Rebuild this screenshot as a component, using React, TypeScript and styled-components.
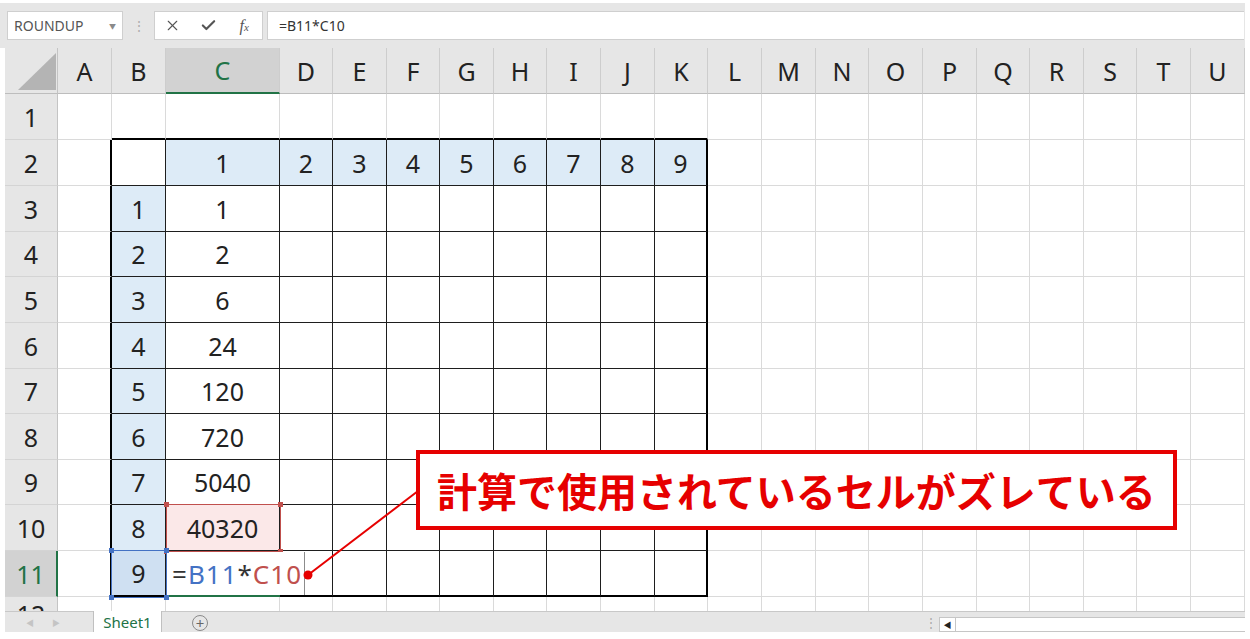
import styled, { createGlobalStyle } from 'styled-components';
import { X, Check } from 'lucide-react';

const COLS = [54, 54, 114, 53, 54, 53, 54, 53, 54, 54, 53, 54, 54, 53, 54, 54, 53, 54, 53, 54, 54];
const LETTERS = 'ABCDEFGHIJKLMNOPQRSTU'.split('');
const ROWS = [46, 46, 46, 45, 46, 46, 45, 46, 45, 46, 46, 46];
const FACT = ['1', '2', '6', '24', '120', '720', '5040', '40320'];

const GREEN = '#217346';
const BLUE = '#4472c4';
const RED = '#c0504d';
const GRIDLINE = '#dadada';

const GlobalStyle = createGlobalStyle`
  * { box-sizing: border-box; }
  body {
    margin: 0;
    background: #fff;
    font-family: 'Noto Sans', 'Noto Sans CJK JP', sans-serif;
  }
`;

const Screen = styled.div`
  position: relative;
  width: 1245px;
  height: 639px;
  padding-top: 3px;
  overflow: hidden;
`;

const TopBar = styled.div`
  height: 45px;
  background: #e6e6e6;
  display: flex;
  align-items: flex-start;
  padding: 8px 1px 0 7px;
`;

const NameBox = styled.div`
  width: 116px;
  height: 29px;
  background: #fff;
  border: 1px solid #cfcfcf;
  display: flex;
  align-items: center;
  justify-content: space-between;
  padding: 0 6px 0 6px;
  font-size: 14px;
  color: #555;
`;

const Caret = styled.span`
  font-size: 7px;
  color: #8a8a8a;
`;

const Grip = styled.div`
  width: 31px;
  height: 29px;
  display: flex;
  align-items: center;
  justify-content: center;
  color: #b0b0b0;
  font-size: 14px;
`;

const ButtonBox = styled.div`
  width: 109px;
  height: 29px;
  background: #fff;
  border: 1px solid #cfcfcf;
  display: flex;
  align-items: center;
`;

const BarButton = styled.div`
  width: 36px;
  display: flex;
  justify-content: center;
  align-items: center;
  color: #555;
`;

const Fx = styled.span`
  font-family: 'Liberation Serif', serif;
  font-style: italic;
  font-size: 16px;
  color: #555;
  sub {
    font-size: 11px;
    vertical-align: baseline;
  }
`;

const FormulaInput = styled.div`
  flex: 1;
  height: 29px;
  margin-left: 4px;
  background: #fff;
  border: 1px solid #cfcfcf;
  border-right: none;
  display: flex;
  align-items: center;
  padding-left: 11px;
  font-size: 14px;
  color: #333;
`;

const Sheet = styled.div`
  height: 563px;
  padding-left: 5px;
  overflow: hidden;
`;

const Grid = styled.div`
  display: grid;
  grid-template-columns: 53px ${COLS.map((w) => `${w}px`).join(' ')};
  grid-template-rows: 46px ${ROWS.map((h) => `${h}px`).join(' ')};
`;

type Edge = { w: number; color: string };

const Cell = styled.div<{ $right: Edge; $bottom: Edge; $bg: string }>`
  border-right: ${(p) => p.$right.w}px solid ${(p) => p.$right.color};
  border-bottom: ${(p) => p.$bottom.w}px solid ${(p) => p.$bottom.color};
  background: ${(p) => p.$bg};
  display: flex;
  align-items: center;
  justify-content: center;
  font-size: 25px;
  color: #222;
  white-space: nowrap;
  overflow: hidden;
`;

const Corner = styled.div`
  position: relative;
  background: #e6e6e6;
  border-right: 1px solid #c4c4c4;
  border-bottom: 1px solid #bdbdbd;
  &::after {
    content: '';
    position: absolute;
    left: 13px;
    top: 5px;
    width: 38px;
    height: 37px;
    background: #b4b4b4;
    clip-path: polygon(0 100%, 100% 0, 100% 100%);
  }
`;

const ColHead = styled.div<{ $active?: boolean }>`
  background: ${(p) => (p.$active ? '#d2d2d2' : '#e6e6e6')};
  border-right: 1px solid #cdcdcd;
  border-bottom: ${(p) => (p.$active ? `2px solid ${GREEN}` : '1px solid #bdbdbd')};
  display: flex;
  align-items: center;
  justify-content: center;
  font-size: 25px;
  color: ${(p) => (p.$active ? GREEN : '#222')};
`;

const RowHead = styled.div<{ $active?: boolean; $lift?: number }>`
  background: ${(p) => (p.$active ? '#d2d2d2' : '#e6e6e6')};
  border-right: ${(p) => (p.$active ? `2px solid ${GREEN}` : '1px solid #c4c4c4')};
  border-bottom: 1px solid #d4d4d4;
  padding-bottom: ${(p) => p.$lift ?? 0}px;
  display: flex;
  align-items: center;
  justify-content: center;
  font-size: 25px;
  color: ${(p) => (p.$active ? GREEN : '#222')};
`;

const RangeBox = styled.div<{ $color: string }>`
  position: absolute;
  border: 1px solid ${(p) => p.$color};
  pointer-events: none;
  span {
    position: absolute;
    width: 5px;
    height: 5px;
    background: ${(p) => p.$color};
  }
  span:nth-child(1) { left: -3px; top: -3px; }
  span:nth-child(2) { right: -3px; top: -3px; }
  span:nth-child(3) { left: -3px; bottom: -3px; }
  span:nth-child(4) { right: -3px; bottom: -3px; }
`;

const EditBox = styled.div`
  position: absolute;
  left: 167px;
  top: 552px;
  width: 138px;
  height: 43px;
  background: #fff;
  border-right: 1px solid #8c8c8c;
  display: flex;
  align-items: center;
  padding-left: 5px;
  font-size: 26px;
  letter-spacing: 1px;
  color: #333;
  white-space: nowrap;
  &::after {
    content: '';
    position: absolute;
    left: -1px;
    bottom: -2px;
    width: 114px;
    height: 2px;
    background: ${GREEN};
  }
`;

const Ref = styled.span<{ $color: string }>`
  color: ${(p) => p.$color};
`;

const Leader = styled.svg`
  position: absolute;
  left: 0;
  top: 0;
  pointer-events: none;
`;

const Callout = styled.div`
  position: absolute;
  left: 416px;
  top: 450px;
  width: 761px;
  height: 80px;
  background: #fff;
  border: 4px solid #e60000;
  display: flex;
  align-items: center;
  padding-left: 17px;
  font-family: 'Noto Sans CJK JP', sans-serif;
  font-weight: 700;
  font-size: 40px;
  color: #e60000;
  white-space: nowrap;
`;

const TabBar = styled.div`
  height: 21px;
  margin-left: 5px;
  background: #e6e6e6;
  border-top: 1px solid #c8c8c8;
  display: flex;
  align-items: stretch;
`;

const NavArea = styled.div`
  width: 88px;
  display: flex;
  align-items: center;
  gap: 18px;
  padding-left: 21px;
  font-size: 8px;
  color: #c4c4c4;
`;

const SheetTab = styled.div`
  width: 69px;
  margin-top: -1px;
  background: #fff;
  border-left: 1px solid #c0c0c0;
  border-right: 1px solid #c0c0c0;
  display: flex;
  align-items: center;
  justify-content: center;
  font-size: 15px;
  color: ${GREEN};
`;

const AddButton = styled.div`
  width: 16px;
  height: 16px;
  margin: 3px 0 0 30px;
  border: 1px solid #8a8a8a;
  border-radius: 50%;
  display: flex;
  align-items: center;
  justify-content: center;
  font-size: 15px;
  line-height: 1;
  color: #666;
`;

const Spacer = styled.div`
  flex: 1;
`;

const BarGrip = styled.div`
  width: 16px;
  display: flex;
  align-items: center;
  justify-content: center;
  color: #a8a8a8;
  font-size: 12px;
`;

const ScrollTrack = styled.div`
  width: 306px;
  margin-top: 5px;
  background: #fff;
  border: 1px solid #c6c6c6;
  border-right: none;
  display: flex;
`;

const ScrollArrow = styled.div`
  width: 16px;
  border-right: 1px solid #c6c6c6;
  display: flex;
  align-items: center;
  justify-content: center;
  font-size: 8px;
  color: #222;
`;

// the table B2:K11 (col index 1..10, row 2..11)
const inTable = (r: number, c: number) => r >= 2 && r <= 11 && c >= 1 && c <= 10;

const rightEdge = (r: number, c: number): Edge => {
  const a = inTable(r, c);
  const b = inTable(r, c + 1);
  if (a && b) return { w: 1, color: '#1e1e1e' };
  if (a || b) return { w: 2, color: '#000' };
  return { w: 1, color: GRIDLINE };
};

const bottomEdge = (r: number, c: number): Edge => {
  const a = inTable(r, c);
  const b = inTable(r + 1, c);
  if (a && b) return { w: 1, color: '#1e1e1e' };
  if (a || b) return { w: 2, color: '#000' };
  return { w: 1, color: GRIDLINE };
};

const cellValue = (r: number, c: number): string => {
  if (r === 2 && c >= 2 && c <= 10) return String(c - 1);
  if (r >= 3 && r <= 11 && c === 1) return String(r - 2);
  if (r >= 3 && r <= 10 && c === 2) return FACT[r - 3];
  return '';
};

const cellFill = (r: number, c: number): string => {
  if (r === 11 && c === 1) return '#cfe0f2';
  if (r === 10 && c === 2) return '#fbe8e8';
  if (r === 2 && c >= 2 && c <= 10) return '#ddebf7';
  if (r >= 3 && r <= 11 && c === 1) return '#ddebf7';
  return '#fff';
};

const App = () => {
  const cells = [];
  for (let r = 1; r <= ROWS.length; r++) {
    cells.push(
      <RowHead key={`h${r}`} $active={r === 11} $lift={r === 12 ? 12 : 0}>
        {r}
      </RowHead>
    );
    for (let c = 0; c < COLS.length; c++) {
      cells.push(
        <Cell key={`${r}-${c}`} $right={rightEdge(r, c)} $bottom={bottomEdge(r, c)} $bg={cellFill(r, c)}>
          {cellValue(r, c)}
        </Cell>
      );
    }
  }

  return (
    <Screen>
      <GlobalStyle />
      <TopBar>
        <NameBox>
          <span>ROUNDUP</span>
          <Caret>▼</Caret>
        </NameBox>
        <Grip>⋮</Grip>
        <ButtonBox>
          <BarButton>
            <X size={17} strokeWidth={1.6} />
          </BarButton>
          <BarButton>
            <Check size={17} strokeWidth={3} />
          </BarButton>
          <BarButton>
            <Fx>
              f<sub>x</sub>
            </Fx>
          </BarButton>
        </ButtonBox>
        <FormulaInput>=B11*C10</FormulaInput>
      </TopBar>

      <Sheet>
        <Grid>
          <Corner />
          {LETTERS.map((l, i) => (
            <ColHead key={l} $active={i === 2}>
              {l}
            </ColHead>
          ))}
          {cells}
        </Grid>
      </Sheet>

      <TabBar>
        <NavArea>
          <span>◀</span>
          <span>▶</span>
        </NavArea>
        <SheetTab>Sheet1</SheetTab>
        <AddButton>+</AddButton>
        <Spacer />
        <BarGrip>⋮</BarGrip>
        <ScrollTrack>
          <ScrollArrow>◀</ScrollArrow>
        </ScrollTrack>
      </TabBar>

      <RangeBox $color={RED} style={{ left: 166, top: 504, width: 115, height: 48 }}>
        <span />
        <span />
        <span />
        <span />
      </RangeBox>
      <EditBox>
        =<Ref $color={BLUE}>B11</Ref>*<Ref $color={RED}>C10</Ref>
      </EditBox>
      <RangeBox $color={BLUE} style={{ left: 111, top: 550, width: 56, height: 48 }}>
        <span />
        <span />
        <span />
        <span />
      </RangeBox>

      <Leader width={1245} height={639}>
        <line x1={308} y1={575} x2={418} y2={491} stroke="#e60000" strokeWidth={2} />
        <circle cx={308} cy={575} r={4.5} fill="#e60000" />
      </Leader>
      <Callout>計算で使用されているセルがズレている</Callout>
    </Screen>
  );
};

export default App;
